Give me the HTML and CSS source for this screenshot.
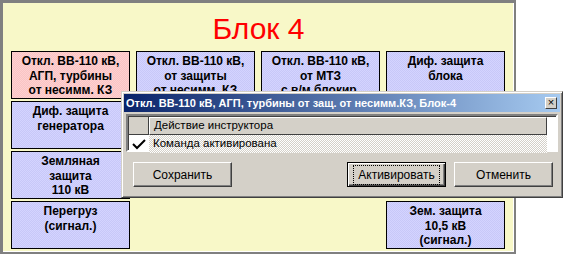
FILE: index.html
```html
<!DOCTYPE html>
<html lang="ru">
<head>
    <meta charset="UTF-8">
    <title>Блок 4</title>
    <link rel="stylesheet" href="styles.css">
</head>
<body>
    <div class="panel">
        <div class="title">Блок 4</div>
        <div class="grid">
            <div class="box pink">Откл. ВВ-110 кВ,<br>АГП, турбины<br>от несимм. КЗ</div>
            <div class="box">Откл. ВВ-110 кВ,<br>от защиты<br>от несимм. КЗ</div>
            <div class="box">Откл. ВВ-110 кВ,<br>от МТЗ<br>с в/м блокир.</div>
            <div class="box">Диф. защита<br>блока</div>

            <div class="box">Диф. защита<br>генератора</div>
            <div class="empty"></div>
            <div class="empty"></div>
            <div class="empty"></div>

            <div class="box">Земляная<br>защита<br>110 кВ</div>
            <div class="empty"></div>
            <div class="empty"></div>
            <div class="empty"></div>

            <div class="box">Перегруз<br>(сигнал.)</div>
            <div class="empty"></div>
            <div class="empty"></div>
            <div class="box">Зем. защита<br>10,5 кВ<br>(сигнал.)</div>
        </div>
    </div>

    <div class="dlg">
        <div class="caption">
            <span>Откл. ВВ-110 кВ, АГП, турбины от защ. от несимм.КЗ, Блок-4</span>
            <div class="xbtn">&#215;</div>
        </div>
        <div class="list">
            <div class="row">
                <div class="chk head"></div>
                <div class="cell head">Действие инструктора</div>
            </div>
            <div class="row">
                <div class="chk">
                    <svg width="16" height="12" viewBox="0 0 16 12"><polyline points="2,6 6,10 14,2" fill="none" stroke="#000" stroke-width="2"/></svg>
                </div>
                <div class="cell sel">Команда активирована</div>
            </div>
        </div>
        <div class="buttons">
            <div class="btn">Сохранить</div>
            <div class="right">
                <div class="btn def"><span>Активировать</span></div>
                <div class="btn">Отменить</div>
            </div>
        </div>
    </div>
</body>
</html>
```

FILE: styles.css
```css
body{margin:0; background:#fff; font-family:"Liberation Sans", Arial, sans-serif;}

.panel{width:516px; height:254px; box-sizing:border-box; background:#f8f8c8; border:3px solid #808080; border-right-width:2px; border-bottom-width:2px; box-shadow:inset -1px -1px 0 #fff;}
.title{height:48px; box-sizing:border-box; padding-top:9px; text-align:center; color:#ff0000; font-size:30px; line-height:34px;}

.grid{display:grid; grid-template-columns:repeat(4, 119px); grid-auto-rows:48px; column-gap:6px; row-gap:2px; padding-left:8px;}
.box{box-sizing:border-box; border:1px solid #000; padding-top:2px; text-align:center; font-weight:bold; font-size:12px; line-height:14.5px; color:#000;
    background:repeating-conic-gradient(#c8c8f8 0 25%, #d4d4ff 0 50%) 0 0/2px 2px;}
.pink{background:repeating-conic-gradient(#f8c4c4 0 25%, #ffd0d0 0 50%) 0 0/2px 2px;}

/* окно поверх панели */
.dlg{position:absolute; left:121px; top:91px; width:442px; height:107px; box-sizing:border-box; background:#d4d0c8;
    border:1px solid; border-color:#d4d0c8 #404040 #404040 #d4d0c8; box-shadow:inset 1px 1px 0 #fff, inset -1px -1px 0 #808080; padding:2px;}
.caption{height:18px; display:flex; align-items:center; justify-content:space-between; padding:0 3px 0 2px;
    background:linear-gradient(to right, #0a246a, #a6caf0); color:#fff; font-weight:bold; font-size:11px;}
.xbtn{width:10px; height:10px; background:#d4d0c8; color:#000; font-size:11px; line-height:9px; text-align:center; font-weight:normal;
    border:1px solid; border-color:#fff #404040 #404040 #fff;}

.list{margin:2px 2px 0 2px; height:38px; box-sizing:border-box; background:#fff; border:2px solid; border-color:#808080 #fff #fff #808080;
    box-shadow:inset 1px 1px 0 #404040; padding:1px 0 0 1px; font-size:11.5px;}
.row{display:flex; height:18px;}
.chk{width:20px; box-sizing:border-box; display:flex; align-items:center; justify-content:center;}
.chk.head{background:#d4d0c8; border-right:1px solid #404040; border-bottom:1px solid #404040;}
.cell{width:398px; box-sizing:border-box; padding-left:4px; line-height:17px; color:#000;}
.cell.head{background:#d4d0c8; border:1px solid; border-color:#fff #404040 #404040 #fff; line-height:15px;}
.cell.sel{background:repeating-conic-gradient(#d4d0c8 0 25%, #fff 0 50%) 0 0/2px 2px;}

.buttons{display:flex; justify-content:space-between; padding:10px 7px 0 9px;}
.right{display:flex; gap:8px;}
.btn{width:99px; height:25px; box-sizing:border-box; display:flex; align-items:center; justify-content:center; font-size:12px;
    border:1px solid; border-color:#fff #404040 #404040 #fff; box-shadow:inset -1px -1px 0 #808080;}
.btn.def{border:1px solid #000; box-shadow:inset 1px 1px 0 #fff, inset -1px -1px 0 #404040, inset -2px -2px 0 #808080;}
.btn.def span{border:1px dotted #000; padding:2px 4px;}
```
